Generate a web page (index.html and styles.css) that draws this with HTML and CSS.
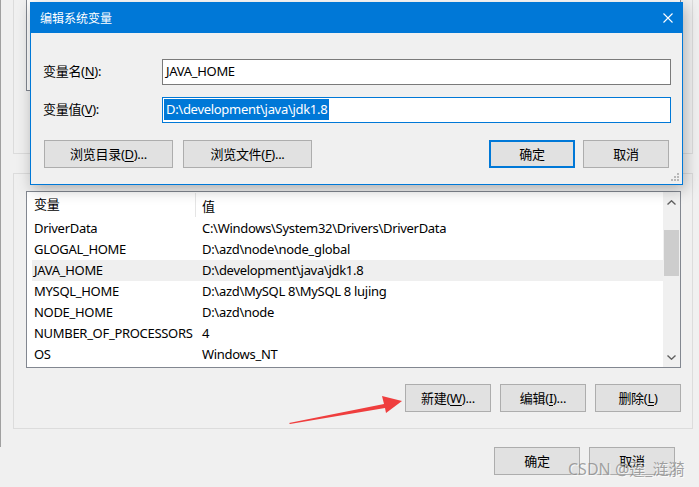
FILE: index.html
```html
<!DOCTYPE html>
<html lang="zh-CN">
<head>
    <meta charset="UTF-8">
    <meta name="viewport" content="width=device-width, initial-scale=1.0">
    <title>环境变量</title>
    <link rel="stylesheet" href="styles.css">
</head>
<body>
    <div class="env-window">
        <div class="group group-user">
            <div class="list-box list-user"></div>
            <div class="btn-row">
                <button class="btn">新建(<u>N</u>)...</button>
                <button class="btn">编辑(<u>E</u>)...</button>
                <button class="btn">删除(<u>D</u>)</button>
            </div>
        </div>

        <div class="group group-system">
            <span class="group-title">系统变量(<u>S</u>)</span>
            <div class="list-box list-system">
                <div class="list-main">
                    <div class="list-head">
                        <span class="cell cell-name">变量</span>
                        <span class="cell cell-value">值</span>
                    </div>
                    <div class="list-row"><span class="cell cell-name">DriverData</span><span class="cell cell-value">C:\Windows\System32\Drivers\DriverData</span></div>
                    <div class="list-row"><span class="cell cell-name">GLOGAL_HOME</span><span class="cell cell-value">D:\azd\node\node_global</span></div>
                    <div class="list-row selected"><span class="cell cell-name">JAVA_HOME</span><span class="cell cell-value">D:\development\java\jdk1.8</span></div>
                    <div class="list-row"><span class="cell cell-name">MYSQL_HOME</span><span class="cell cell-value">D:\azd\MySQL 8\MySQL 8 lujing</span></div>
                    <div class="list-row"><span class="cell cell-name">NODE_HOME</span><span class="cell cell-value">D:\azd\node</span></div>
                    <div class="list-row"><span class="cell cell-name">NUMBER_OF_PROCESSORS</span><span class="cell cell-value">4</span></div>
                    <div class="list-row"><span class="cell cell-name">OS</span><span class="cell cell-value">Windows_NT</span></div>
                </div>
                <div class="scrollbar">
                    <span class="sb-arrow">
                        <svg width="9" height="5" viewBox="0 0 9 5"><path d="M0.5 4.5 L4.5 0.8 L8.5 4.5" fill="none" stroke="#606060" stroke-width="1.4"/></svg>
                    </span>
                    <span class="sb-track"><span class="sb-thumb"></span></span>
                    <span class="sb-arrow">
                        <svg width="9" height="5" viewBox="0 0 9 5"><path d="M0.5 0.5 L4.5 4.2 L8.5 0.5" fill="none" stroke="#606060" stroke-width="1.4"/></svg>
                    </span>
                </div>
            </div>
            <div class="btn-row">
                <button class="btn">新建(<u>W</u>)...</button>
                <button class="btn">编辑(<u>I</u>)...</button>
                <button class="btn">删除(<u>L</u>)</button>
            </div>
        </div>

        <div class="btn-row window-actions">
            <button class="btn">确定</button>
            <button class="btn">取消</button>
        </div>
    </div>

    <!-- 编辑对话框，浮在环境变量窗口上面 -->
    <div class="dialog">
        <div class="dialog-title">
            <span>编辑系统变量</span>
            <svg class="close-icon" width="10" height="10" viewBox="0 0 10 10"><path d="M0.5 0.5 L9.5 9.5 M9.5 0.5 L0.5 9.5" stroke="#fff" stroke-width="1.1"/></svg>
        </div>
        <div class="dialog-body">
            <div class="field">
                <label for="varName">变量名(<u>N</u>):</label>
                <div class="text-input" id="varName">JAVA_HOME</div>
            </div>
            <div class="field">
                <label for="varValue">变量值(<u>V</u>):</label>
                <div class="text-input focused" id="varValue"><span class="selection">D:\development\java\jdk1.8</span></div>
            </div>
            <div class="dialog-actions">
                <button class="btn btn-wide">浏览目录(<u>D</u>)...</button>
                <button class="btn btn-wide">浏览文件(<u>F</u>)...</button>
                <span class="spacer"></span>
                <button class="btn btn-default">确定</button>
                <button class="btn">取消</button>
            </div>
        </div>
        <svg class="grip" width="8" height="8" viewBox="0 0 8 8">
            <rect x="6" y="0" width="2" height="2" fill="#b8b8b8"/>
            <rect x="3" y="3" width="2" height="2" fill="#b8b8b8"/>
            <rect x="6" y="3" width="2" height="2" fill="#b8b8b8"/>
            <rect x="0" y="6" width="2" height="2" fill="#b8b8b8"/>
            <rect x="3" y="6" width="2" height="2" fill="#b8b8b8"/>
            <rect x="6" y="6" width="2" height="2" fill="#b8b8b8"/>
        </svg>
    </div>

    <svg class="arrow" width="120" height="32" viewBox="0 0 120 32">
        <polygon points="4,30 99,11 97,3 117,8 101,20 100,15 5,31" fill="#ef3e3e"/>
    </svg>

    <div class="watermark">CSDN @莲_涟漪</div>
</body>
</html>
```

FILE: styles.css
```css
:root {
    --win-bg: #f0f0f0;
    --accent: #0078d7;
    --btn-bg: #e1e1e1;
    --btn-border: #adadad;
    --list-border: #828790;
    --group-border: #dcdcdc;
}

* {
    box-sizing: border-box;
}

body {
    margin: 0;
    width: 699px;
    height: 487px;
    overflow: hidden;
    position: relative;
    background: var(--win-bg);
    font-family: "Noto Sans", "Noto Sans CJK SC", sans-serif;
    font-size: 13px;
    letter-spacing: -0.3px;
    color: #000;
}

u {
    text-decoration-thickness: 1px;
    text-underline-offset: 2px;
}

/* 底层：环境变量窗口 */
.env-window {
    height: 487px;
    border-left: 1px solid #a0a0a0;
    padding: 0 6px 0 12px;
}

.group {
    width: 680px;
    border: 1px solid var(--group-border);
}

.group-user {
    margin-top: -40px;
    height: 194px;
    padding: 19px 11px 0 12px;
}

.group-system {
    margin-top: 19px;
    height: 256px;
    padding: 0 11px 0 12px;
}

.group-title {
    display: block;
    width: fit-content;
    margin: -9px 0 0 6px;
    padding: 0 1px;
    line-height: 17px;
    background: var(--win-bg);
}

.list-box {
    border: 1px solid var(--list-border);
    background: #fff;
}

.list-user {
    height: 111px;
}

.list-system {
    margin-top: 9px;
    height: 177px;
    display: flex;
}

.list-main {
    flex: 1;
}

.list-head,
.list-row {
    display: grid;
    grid-template-columns: 164px 1fr;
    margin-left: 5px;
}

.list-head {
    height: 26px;
    align-items: center;
}

.list-head .cell-name {
    border-right: 1px solid #e5e5e5;
    height: 24px;
    line-height: 22px;
}

.list-row {
    height: 21px;
    line-height: 20px;
    white-space: nowrap;
}

.list-row.selected {
    background: #efefef;
}

.cell-name {
    padding-left: 2px;
}

.cell-value {
    padding-left: 6px;
}

.scrollbar {
    width: 17px;
    background: var(--win-bg);
    display: flex;
    flex-direction: column;
}

.sb-arrow {
    height: 20px;
    display: flex;
    align-items: center;
    justify-content: center;
}

.sb-track {
    flex: 1;
    padding: 18px 1px 0;
}

.sb-thumb {
    display: block;
    height: 46px;
    background: #cdcdcd;
}

.btn-row {
    display: flex;
    justify-content: flex-end;
    gap: 9px;
    margin-top: 16px;
}

.window-actions {
    margin-top: 18px;
    padding-right: 18px;
}

.btn {
    width: 86px;
    height: 28px;
    padding: 0 0 1px;
    background: var(--btn-bg);
    border: 1px solid var(--btn-border);
    font-family: inherit;
    font-size: 13px;
    letter-spacing: -0.3px;
    color: #000;
}

/* 编辑系统变量对话框 */
.dialog {
    position: absolute;
    left: 30px;
    top: 2px;
    width: 653px;
    height: 183px;
    border: 1px solid var(--accent);
    background: var(--win-bg);
    box-shadow: 2px 4px 14px rgba(0, 0, 0, 0.28);
}

.dialog-title {
    height: 30px;
    background: var(--accent);
    color: #fff;
    font-size: 12px;
    letter-spacing: 0;
    display: flex;
    align-items: center;
    justify-content: space-between;
    padding: 0 9px 0 9px;
}

.dialog-body {
    padding: 26px 11px 16px 12px;
}

.field {
    display: grid;
    grid-template-columns: 119px 1fr;
    align-items: center;
}

.field label {
    padding-bottom: 3px;
}

.field + .field {
    margin-top: 12px;
}

.text-input {
    height: 26px;
    border: 1px solid #7a7a7a;
    background: #fff;
    padding: 0 3px;
    line-height: 23px;
    white-space: nowrap;
}

.text-input.focused {
    border-color: var(--accent);
    padding-left: 1px;
}

.selection {
    display: inline-block;
    line-height: 21px;
    padding: 0 2px;
    background: var(--accent);
    color: #fff;
}

.dialog-actions {
    display: flex;
    margin-top: 17px;
    padding: 0 2px 0 1px;
}

.btn-wide {
    width: 129px;
    margin-right: 10px;
}

.spacer {
    flex: 1;
}

.btn-default {
    border: 2px solid var(--accent);
    margin-right: 8px;
}

.grip {
    position: absolute;
    right: 3px;
    bottom: 3px;
}

/* 截图上的标注 */
.arrow {
    position: absolute;
    left: 285px;
    top: 393px;
}

.watermark {
    position: absolute;
    left: 568px;
    top: 459px;
    font-size: 16px;
    line-height: 20px;
    letter-spacing: 0;
    color: rgba(135, 135, 135, 0.75);
    text-shadow: 1px 1px 0 rgba(255, 255, 255, 0.7);
    white-space: nowrap;
}
```
